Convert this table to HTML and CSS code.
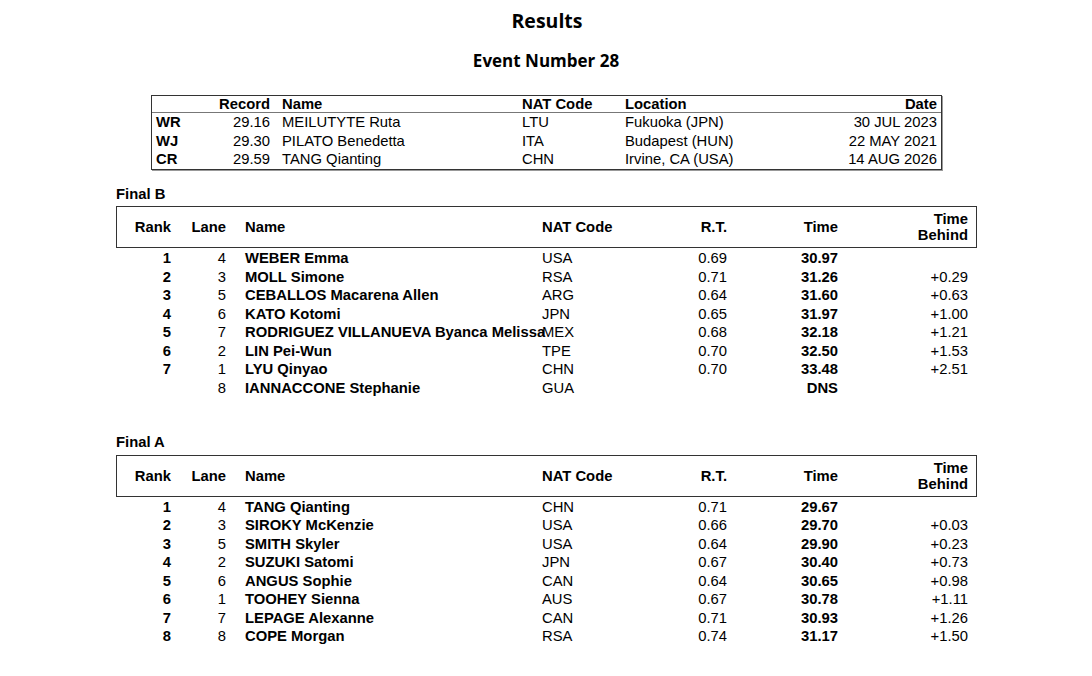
FILE: index.html
```html
<!DOCTYPE html>
<html>
<head>
<meta charset="utf-8">
<title>Results</title>
<link rel="stylesheet" href="styles.css">
</head>
<body>
<div class="page">
  <h1 class="title">Results</h1>
  <h2 class="event">Event Number 28</h2>

  <div class="records">
    <div class="rec-row rec-head">
      <div></div>
      <div class="r">Record</div>
      <div class="rname">Name</div>
      <div>NAT Code</div>
      <div>Location</div>
      <div class="r">Date</div>
    </div>
    <div class="rec-row">
      <div class="b">WR</div>
      <div class="r">29.16</div>
      <div class="rname">MEILUTYTE Ruta</div>
      <div>LTU</div>
      <div>Fukuoka (JPN)</div>
      <div class="r">30 JUL 2023</div>
    </div>
    <div class="rec-row">
      <div class="b">WJ</div>
      <div class="r">29.30</div>
      <div class="rname">PILATO Benedetta</div>
      <div>ITA</div>
      <div>Budapest (HUN)</div>
      <div class="r">22 MAY 2021</div>
    </div>
    <div class="rec-row">
      <div class="b">CR</div>
      <div class="r">29.59</div>
      <div class="rname">TANG Qianting</div>
      <div>CHN</div>
      <div>Irvine, CA (USA)</div>
      <div class="r">14 AUG 2026</div>
    </div>
  </div>

  <section class="final first">
    <div class="final-label">Final B</div>
    <div class="res-row res-head">
      <div class="r">Rank</div>
      <div class="r">Lane</div>
      <div class="name">Name</div>
      <div>NAT Code</div>
      <div class="r">R.T.</div>
      <div class="r">Time</div>
      <div class="r two">Time<br>Behind</div>
    </div>
    <div class="res-row"><div class="r b">1</div><div class="r">4</div><div class="name b">WEBER Emma</div><div>USA</div><div class="r">0.69</div><div class="r b">30.97</div><div class="r"></div></div>
    <div class="res-row"><div class="r b">2</div><div class="r">3</div><div class="name b">MOLL Simone</div><div>RSA</div><div class="r">0.71</div><div class="r b">31.26</div><div class="r">+0.29</div></div>
    <div class="res-row"><div class="r b">3</div><div class="r">5</div><div class="name b">CEBALLOS Macarena Allen</div><div>ARG</div><div class="r">0.64</div><div class="r b">31.60</div><div class="r">+0.63</div></div>
    <div class="res-row"><div class="r b">4</div><div class="r">6</div><div class="name b">KATO Kotomi</div><div>JPN</div><div class="r">0.65</div><div class="r b">31.97</div><div class="r">+1.00</div></div>
    <div class="res-row"><div class="r b">5</div><div class="r">7</div><div class="name b">RODRIGUEZ VILLANUEVA Byanca Melissa</div><div>MEX</div><div class="r">0.68</div><div class="r b">32.18</div><div class="r">+1.21</div></div>
    <div class="res-row"><div class="r b">6</div><div class="r">2</div><div class="name b">LIN Pei-Wun</div><div>TPE</div><div class="r">0.70</div><div class="r b">32.50</div><div class="r">+1.53</div></div>
    <div class="res-row"><div class="r b">7</div><div class="r">1</div><div class="name b">LYU Qinyao</div><div>CHN</div><div class="r">0.70</div><div class="r b">33.48</div><div class="r">+2.51</div></div>
    <div class="res-row"><div class="r b"></div><div class="r">8</div><div class="name b">IANNACCONE Stephanie</div><div>GUA</div><div class="r"></div><div class="r b">DNS</div><div class="r"></div></div>
  </section>

  <section class="final second">
    <div class="final-label">Final A</div>
    <div class="res-row res-head">
      <div class="r">Rank</div>
      <div class="r">Lane</div>
      <div class="name">Name</div>
      <div>NAT Code</div>
      <div class="r">R.T.</div>
      <div class="r">Time</div>
      <div class="r two">Time<br>Behind</div>
    </div>
    <div class="res-row"><div class="r b">1</div><div class="r">4</div><div class="name b">TANG Qianting</div><div>CHN</div><div class="r">0.71</div><div class="r b">29.67</div><div class="r"></div></div>
    <div class="res-row"><div class="r b">2</div><div class="r">3</div><div class="name b">SIROKY McKenzie</div><div>USA</div><div class="r">0.66</div><div class="r b">29.70</div><div class="r">+0.03</div></div>
    <div class="res-row"><div class="r b">3</div><div class="r">5</div><div class="name b">SMITH Skyler</div><div>USA</div><div class="r">0.64</div><div class="r b">29.90</div><div class="r">+0.23</div></div>
    <div class="res-row"><div class="r b">4</div><div class="r">2</div><div class="name b">SUZUKI Satomi</div><div>JPN</div><div class="r">0.67</div><div class="r b">30.40</div><div class="r">+0.73</div></div>
    <div class="res-row"><div class="r b">5</div><div class="r">6</div><div class="name b">ANGUS Sophie</div><div>CAN</div><div class="r">0.64</div><div class="r b">30.65</div><div class="r">+0.98</div></div>
    <div class="res-row"><div class="r b">6</div><div class="r">1</div><div class="name b">TOOHEY Sienna</div><div>AUS</div><div class="r">0.67</div><div class="r b">30.78</div><div class="r">+1.11</div></div>
    <div class="res-row"><div class="r b">7</div><div class="r">7</div><div class="name b">LEPAGE Alexanne</div><div>CAN</div><div class="r">0.71</div><div class="r b">30.93</div><div class="r">+1.26</div></div>
    <div class="res-row"><div class="r b">8</div><div class="r">8</div><div class="name b">COPE Morgan</div><div>RSA</div><div class="r">0.74</div><div class="r b">31.17</div><div class="r">+1.50</div></div>
  </section>
</div>
</body>
</html>
```

FILE: styles.css
```css
html, body {
  margin: 0;
  padding: 0;
  background: #fff;
}

body {
  font-family: "Liberation Sans", Arial, sans-serif;
  font-size: 14.8px;
  color: #000;
}

.page {
  width: 1092px;
  padding-top: 8px;
}

.title {
  margin: 0;
  text-align: center;
  font-family: "Open Sans", "Noto Sans", sans-serif;
  font-weight: 700;
  font-size: 19.5px;
  line-height: 26px;
  padding-left: 2px;
}

.event {
  margin: 16px 0 0;
  text-align: center;
  font-family: "Open Sans", "Noto Sans", sans-serif;
  font-weight: 700;
  font-size: 17px;
  line-height: 22px;
}

.records {
  margin: 23px 0 0 151px;
  width: 789px;
  border: 1px solid #333;
  box-shadow: 1px 1px 0 #999;
}

.rec-row {
  display: grid;
  grid-template-columns: 50px 64px 252px 103px 1fr auto;
  padding: 0 4px;
  line-height: 18.6px;
  height: 18.6px;
  white-space: nowrap;
}

.rec-head {
  font-weight: 700;
  height: 16px;
  line-height: 16px;
  border-bottom: 1px solid #777;
}

.rec-row .rname {
  padding-left: 12px;
}

.r { text-align: right; }
.b { font-weight: 700; }

.final.first { margin-top: 15px; }
.final.second { margin-top: 36px; }

.final-label {
  margin-left: 116px;
  font-weight: 700;
  line-height: 18.6px;
  margin-bottom: 3px;
}

.res-row {
  display: grid;
  grid-template-columns: 54px 55px 316px 98px 87px 111px 130px;
  margin-left: 117px;
  width: 859px;
  line-height: 18.5px;
  height: 18.5px;
  white-space: nowrap;
}

.res-row > div {
  min-width: 0;
}

.res-row .name {
  padding-left: 19px;
}

.res-head {
  margin-left: 116px;
  height: 40px;
  border: 1px solid #333;
  font-weight: 700;
  align-items: center;
  line-height: 16px;
}

.res-head + .res-row {
  margin-top: 1px;
}
```
